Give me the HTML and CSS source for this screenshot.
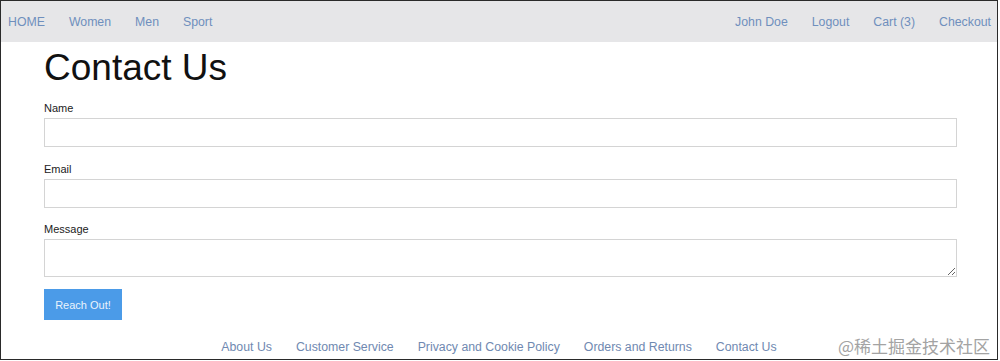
FILE: index.html
```html
<!DOCTYPE html>
<html lang="en">
<head>
<meta charset="utf-8">
<title>Contact Us</title>
<link rel="stylesheet" href="styles.css">
</head>
<body>
<div class="frame">
  <nav class="topnav">
    <div class="nav-group">
      <a href="#">HOME</a>
      <a href="#">Women</a>
      <a href="#">Men</a>
      <a href="#">Sport</a>
    </div>
    <div class="nav-group">
      <a href="#">John Doe</a>
      <a href="#">Logout</a>
      <a href="#">Cart (3)</a>
      <a href="#">Checkout</a>
    </div>
  </nav>
  <main class="content">
    <h1 class="title">Contact Us</h1>
    <form class="form">
      <label class="label" for="name">Name</label>
      <input class="field" id="name" type="text">
      <label class="label" for="email">Email</label>
      <input class="field tight" id="email" type="email">
      <label class="label" for="message">Message</label>
      <textarea class="field area" id="message"></textarea>
      <button class="btn" type="button">Reach Out!</button>
    </form>
  </main>
  <footer class="footer">
    <a href="#">About Us</a>
    <a href="#">Customer Service</a>
    <a href="#">Privacy and Cookie Policy</a>
    <a href="#">Orders and Returns</a>
    <a href="#">Contact Us</a>
  </footer>
  <div class="watermark">@稀土掘金技术社区</div>
</div>
</body>
</html>
```

FILE: styles.css
```css
* { box-sizing: border-box; }
html, body { margin: 0; padding: 0; background: #fff; }
body {
  font-family: "Liberation Sans", Arial, Helvetica, sans-serif;
  color: #222;
}
.frame {
  position: relative;
  width: 998px;
  height: 360px;
  border: 1px solid #2a2a2a;
  display: flex;
  flex-direction: column;
}
.topnav {
  height: 41px;
  background: #e6e6e8;
  display: flex;
  justify-content: space-between;
  align-items: center;
  padding: 0 6px 0 7px;
}
.nav-group { display: flex; gap: 24px; }
.topnav a, .footer a {
  color: #6f8fbd;
  text-decoration: none;
  font-size: 12.3px;
  line-height: 14px;
}
.content {
  padding: 0 40px 0 43px;
}
.title {
  margin: 8px 0 15px;
  font-size: 37px;
  line-height: 36px;
  font-weight: normal;
  color: #111;
}
.form { display: flex; flex-direction: column; }
.label {
  font-size: 11px;
  line-height: 14px;
  color: #222;
  margin-bottom: 3px;
}
.field {
  height: 29px;
  border: 1px solid #d4d4d4;
  background: #fff;
  margin: 0 0 15px;
  padding: 4px 6px;
  font-family: inherit;
  font-size: 12px;
  outline: none;
}
.tight { margin-bottom: 14px; }
.area {
  height: 38px;
  margin-bottom: 12px;
  resize: vertical;
}
.btn {
  align-self: flex-start;
  width: 78px;
  height: 31px;
  background: #4b9be8;
  color: #eaf3fc;
  border: none;
  font-family: inherit;
  font-size: 11px;
  padding: 0;
}
.footer {
  margin-top: auto;
  display: flex;
  justify-content: center;
  gap: 24px;
  padding-bottom: 5px;
}
.footer a { color: #7089b1; }
.watermark {
  position: absolute;
  right: 7px;
  bottom: 2px;
  font-family: "Noto Sans CJK SC", sans-serif;
  font-size: 17px;
  line-height: 22px;
  color: #a3a3a3;
}
```
